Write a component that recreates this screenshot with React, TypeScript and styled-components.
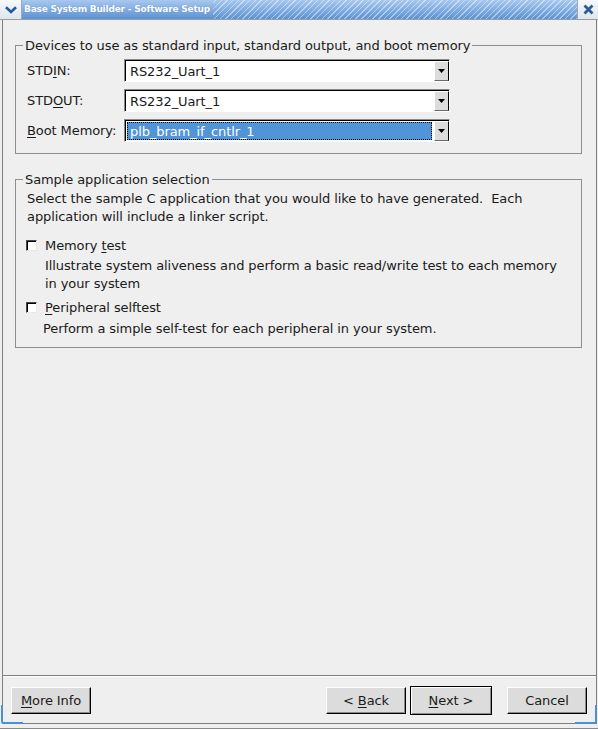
import React from 'react';
import styled, { createGlobalStyle } from 'styled-components';

const GlobalStyle = createGlobalStyle`
  html, body {
    margin: 0;
    padding: 0;
    background: #efefef;
  }
  body {
    font-family: "DejaVu Sans", "Noto Sans", sans-serif;
    font-size: 13px;
    letter-spacing: -0.09px;
    color: #1a1a1a;
  }
`;

const Window = styled.div`
  position: relative;
  box-sizing: border-box;
  width: 598px;
  height: 729px;
  display: flex;
  flex-direction: column;
  background: #efefef;
  padding: 0 1px 4px 2px;
  border-bottom: 1px solid #8a8a8a;
`;

const TitleBar = styled.div`
  display: flex;
  height: 19px;
  margin: 0 -1px 0 -2px;
  border-bottom: 1px solid #9c9c9c;
  background: linear-gradient(#a8c8ee, #5a92d4);
`;

const TitleButton = styled.div<{ $side: 'left' | 'right' }>`
  width: ${p => (p.$side === 'left' ? '21px' : '20px')};
  flex: none;
  display: flex;
  align-items: center;
  justify-content: center;
  background: linear-gradient(#f6f8fb, #dfe6ee);
  border-${p => (p.$side === 'left' ? 'right' : 'left')}: 1px solid #9aa9bb;
`;

const TitleText = styled.div`
  flex: none;
  padding: 0 3px 0 2px;
  color: #ffffff;
  font-weight: bold;
  font-size: 9px;
  letter-spacing: -0.2px;
  line-height: 19px;
  text-shadow: 0 0 1px rgba(30, 70, 120, 0.4);
`;

const Hatch = styled.div`
  flex: 1;
  background: repeating-linear-gradient(
    -45deg,
    rgba(255, 255, 255, 0.45) 0 1px,
    transparent 1px 4px
  );
`;

const Body = styled.div`
  flex: 1;
  display: flex;
  flex-direction: column;
  border-left: 1px solid #7d7d7d;
  border-right: 1px solid #7d7d7d;
  border-bottom: 1px solid #7d7d7d;
`;

const Content = styled.div`
  flex: 1;
  padding: 18px 14px 0 12px;
`;

const GroupBox = styled.fieldset<{ $gap?: number }>`
  margin: ${p => p.$gap ?? 0}px 0 0 0;
  padding: 0 0 0 7px;
  border: 1px solid #8e8e8e;
  min-width: 0;
`;

const Legend = styled.legend`
  padding: 0 2px;
  font-size: 13px;
  line-height: 15px;
`;

const GroupInner = styled.div<{ $top: number; $bottom: number }>`
  padding: ${p => p.$top}px 0 ${p => p.$bottom}px 4px;
`;

const FieldRow = styled.div`
  display: grid;
  grid-template-columns: 97px 326px;
  align-items: center;
  height: 23px;
  & + & {
    margin-top: 7px;
  }
`;

const Mnemonic = styled.span`
  text-decoration: underline;
  text-underline-offset: 2px;
`;

const Combo = styled.div`
  box-sizing: border-box;
  height: 23px;
  display: flex;
  align-items: stretch;
  background: #ffffff;
  border-top: 1px solid #8a8a8a;
  border-left: 1px solid #8a8a8a;
  border-bottom: 1px solid #ffffff;
  border-right: 1px solid #ffffff;
  box-shadow: inset 1px 1px 0 #000000;
`;

const ComboValue = styled.div<{ $focused?: boolean }>`
  flex: 1;
  display: flex;
  align-items: center;
  margin: 2px 2px 1px 2px;
  padding-left: 3px;
  background: ${p => (p.$focused ? '#5294d8' : 'transparent')};
  color: ${p => (p.$focused ? '#ffffff' : '#1a1a1a')};
  outline: ${p => (p.$focused ? '1px dotted #000000' : 'none')};
  outline-offset: -1px;
`;

const ComboArrow = styled.div`
  box-sizing: border-box;
  width: 15px;
  margin: 1px 0 0 0;
  display: flex;
  align-items: center;
  justify-content: center;
  background: #dcdcdc;
  border-top: 1px solid #ffffff;
  border-left: 1px solid #ffffff;
  border-right: 1px solid #000000;
  border-bottom: 1px solid #6a6a6a;
`;

const Paragraph = styled.div<{ $indent?: number; $top?: number }>`
  line-height: 18px;
  padding-left: ${p => p.$indent ?? 0}px;
  margin-top: ${p => p.$top ?? 0}px;
`;

const CheckRow = styled.label<{ $top: number }>`
  display: flex;
  align-items: center;
  gap: 8px;
  height: 18px;
  margin-top: ${p => p.$top}px;
  margin-left: -1px;
`;

const CheckBox = styled.span`
  box-sizing: border-box;
  width: 11px;
  height: 11px;
  background: #ffffff;
  border-top: 1px solid #4a4a4a;
  border-left: 1px solid #4a4a4a;
  border-right: 1px solid #e8e8e8;
  border-bottom: 1px solid #e8e8e8;
  box-shadow: inset 1px 1px 0 #000000;
`;

const Separator = styled.div`
  height: 1px;
  background: #7f7f7f;
  border-bottom: 1px solid #ffffff;
`;

const ButtonRow = styled.div`
  display: flex;
  align-items: center;
  padding: 9px 9px 8px 8px;
`;

const Spacer = styled.div`
  flex: 1;
`;

const Button = styled.button<{ $default?: boolean; $gap?: number }>`
  box-sizing: border-box;
  width: ${p => (p.$default ? 82 : 80)}px;
  height: ${p => (p.$default ? 29 : 27)}px;
  margin-left: ${p => p.$gap ?? 0}px;
  padding: 0;
  font-family: "DejaVu Sans", sans-serif;
  font-size: 13px;
  letter-spacing: -0.09px;
  color: #1a1a1a;
  background: #dcdcdc;
  border-top: 1px solid ${p => (p.$default ? '#000000' : '#ffffff')};
  border-left: 1px solid ${p => (p.$default ? '#000000' : '#ffffff')};
  border-right: 1px solid #000000;
  border-bottom: 1px solid #000000;
  box-shadow: ${p =>
    p.$default
      ? 'inset 1px 1px 0 #ffffff, inset -1px -1px 0 #8a8a8a'
      : 'inset -1px -1px 0 #8a8a8a'};
`;

const Corner = styled.div<{ $side: 'left' | 'right' }>`
  position: absolute;
  bottom: 4px;
  ${p => p.$side}: 1px;
  width: 20px;
  height: 17px;
  border-bottom: 2px solid #4a8fd8;
  border-${p => p.$side}: 2px solid #4a8fd8;
  border-bottom-${p => p.$side}-radius: 3px;
  pointer-events: none;
`;

const Chevron = () => (
  <svg width="12" height="8" viewBox="0 0 12 8">
    <path d="M1 1.2 L6 6 L11 1.2" fill="none" stroke="#1f5c9c" strokeWidth="2.6" />
  </svg>
);

const CloseIcon = () => (
  <svg width="11" height="11" viewBox="0 0 11 11">
    <path d="M1.5 1.5 L9.5 9.5 M9.5 1.5 L1.5 9.5" stroke="#2b5e98" strokeWidth="2.8" />
  </svg>
);

const DownArrow = () => (
  <svg width="7" height="4" viewBox="0 0 7 4">
    <path d="M0 0 H7 L3.5 4 Z" fill="#000000" />
  </svg>
);

const devices = [
  { label: <>STD<Mnemonic>I</Mnemonic>N:</>, value: 'RS232_Uart_1' },
  { label: <>STD<Mnemonic>O</Mnemonic>UT:</>, value: 'RS232_Uart_1' },
  { label: <><Mnemonic>B</Mnemonic>oot Memory:</>, value: 'plb_bram_if_cntlr_1', focused: true },
];

export default function App() {
  return (
    <>
      <GlobalStyle />
      <Window>
        <TitleBar>
          <TitleButton $side="left"><Chevron /></TitleButton>
          <TitleText>Base System Builder - Software Setup</TitleText>
          <Hatch />
          <TitleButton $side="right"><CloseIcon /></TitleButton>
        </TitleBar>
        <Body>
          <Content>
            <GroupBox>
              <Legend>Devices to use as standard input, standard output, and boot memory</Legend>
              <GroupInner $top={6} $bottom={11}>
                {devices.map((d, i) => (
                  <FieldRow key={i}>
                    <span>{d.label}</span>
                    <Combo>
                      <ComboValue $focused={d.focused}>{d.value}</ComboValue>
                      <ComboArrow><DownArrow /></ComboArrow>
                    </Combo>
                  </FieldRow>
                ))}
              </GroupInner>
            </GroupBox>
            <GroupBox $gap={18}>
              <Legend>Sample application selection</Legend>
              <GroupInner $top={3} $bottom={9}>
                <Paragraph>
                  Select the sample C application that you would like to have generated.&nbsp; Each
                  <br />
                  application will include a linker script.
                </Paragraph>
                <CheckRow $top={10}>
                  <CheckBox />
                  <span>Memory <Mnemonic>t</Mnemonic>est</span>
                </CheckRow>
                <Paragraph $indent={18} $top={3}>
                  Illustrate system aliveness and perform a basic read/write test to each memory
                  <br />
                  in your system
                </Paragraph>
                <CheckRow $top={5}>
                  <CheckBox />
                  <span><Mnemonic>P</Mnemonic>eripheral selftest</span>
                </CheckRow>
                <Paragraph $indent={16} $top={4}>
                  Perform a simple self-test for each peripheral in your system.
                </Paragraph>
              </GroupInner>
            </GroupBox>
          </Content>
          <Separator />
          <ButtonRow>
            <Button><Mnemonic>M</Mnemonic>ore Info</Button>
            <Spacer />
            <Button>&lt; <Mnemonic>B</Mnemonic>ack</Button>
            <Button $default $gap={4}><Mnemonic>N</Mnemonic>ext &gt;</Button>
            <Button $gap={15}>Cancel</Button>
          </ButtonRow>
        </Body>
        <Corner $side="left" />
        <Corner $side="right" />
      </Window>
    </>
  );
}
